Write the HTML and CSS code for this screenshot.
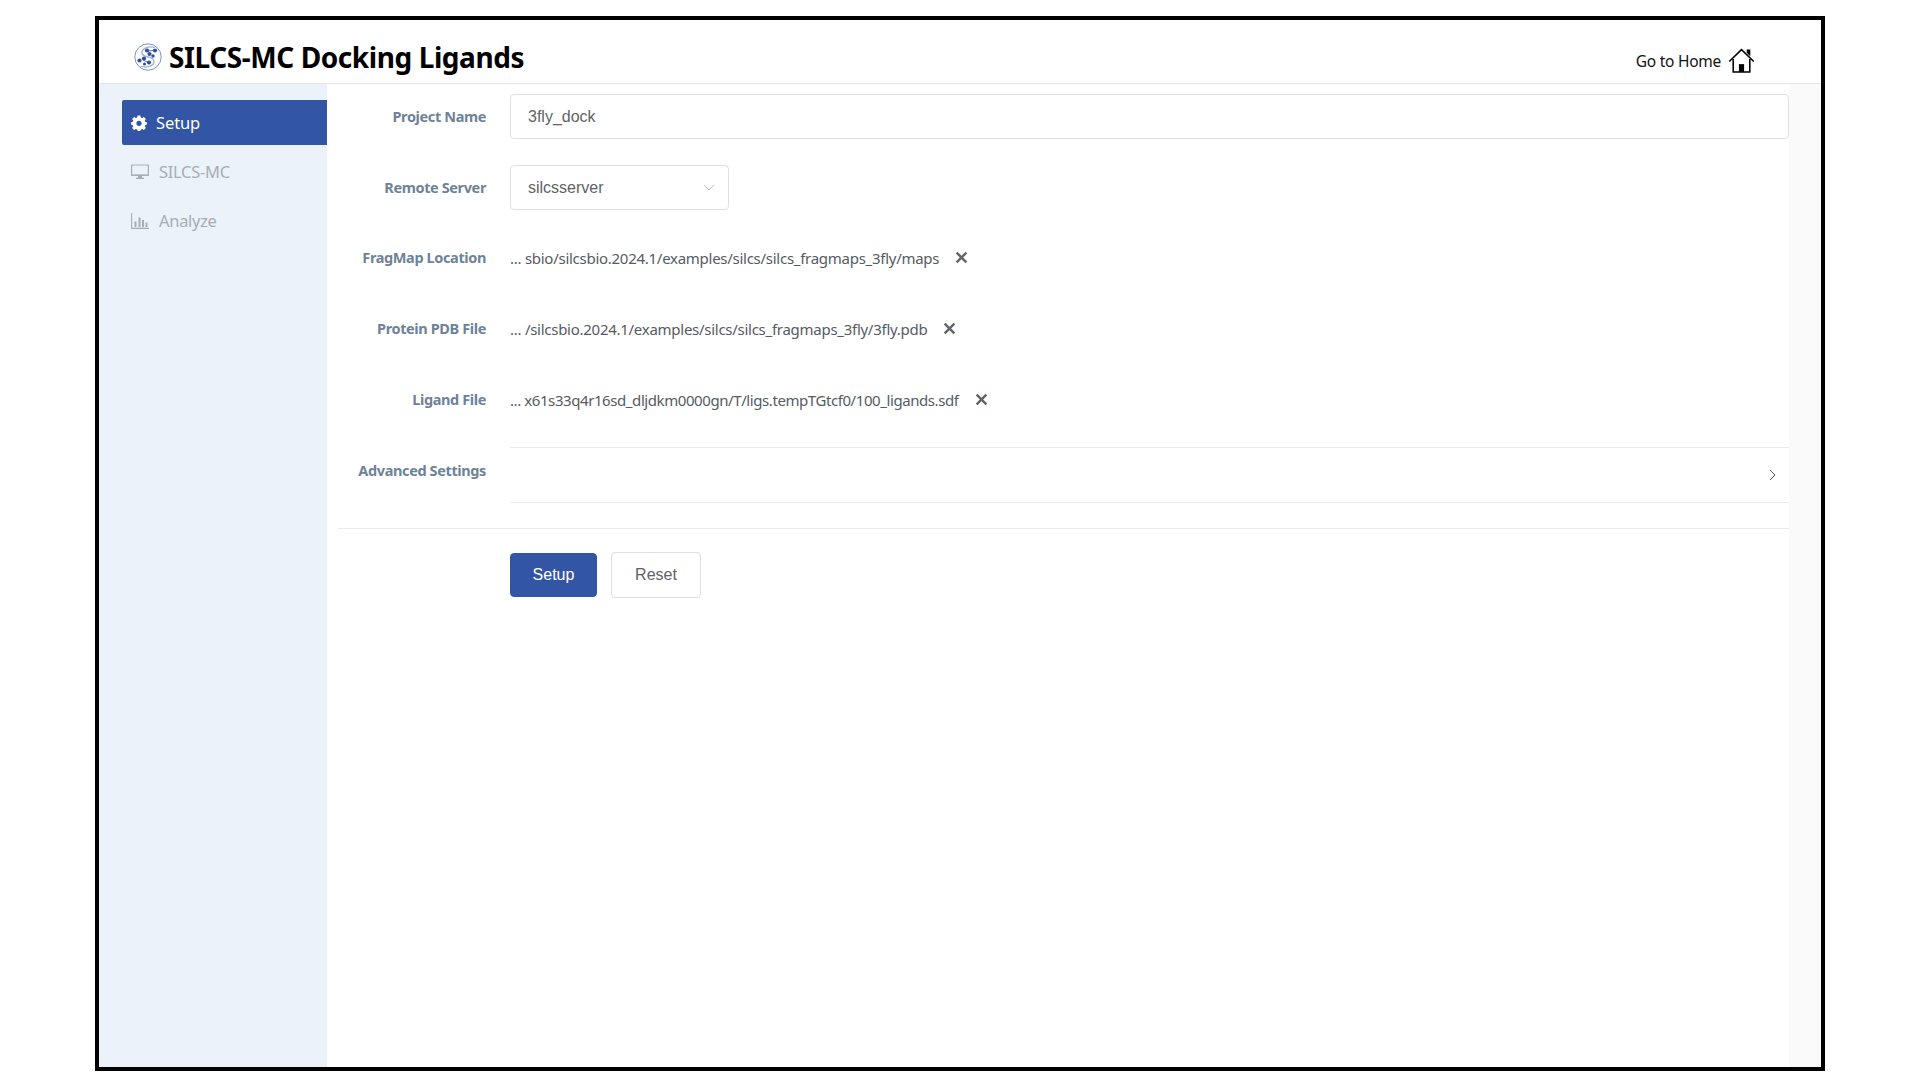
FILE: index.html
```html
<!DOCTYPE html>
<html lang="en">
<head>
    <meta charset="UTF-8">
    <meta name="viewport" content="width=device-width, initial-scale=1.0">
    <title>SILCS-MC Docking Ligands</title>
    <link rel="stylesheet" href="styles.css">
</head>
<body>
    <div class="frame">
        <!-- Header -->
        <header class="top-bar">
            <div class="brand">
                <svg class="brand-logo" viewBox="0 0 28 28">
                    <circle cx="14" cy="14" r="13.2" fill="#fff" stroke="#6f88bd" stroke-width="0.9"/>
                    <path d="M21 4.5C15 2.5 7 5.5 8 10.5C9 15 19.5 13 20 18C20.5 23 12 25.5 6.5 23" fill="none" stroke="#9db0d6" stroke-width="1.3"/>
                    <path d="M12 8L21 7.5M9 17L15 20" fill="none" stroke="#2f5299" stroke-width="0.8"/>
                    <g fill="#2f5299">
                        <circle cx="13" cy="7.5" r="2.1"/>
                        <circle cx="21" cy="7.5" r="2.1"/>
                        <circle cx="15.5" cy="11" r="2.1"/>
                        <circle cx="19" cy="13" r="1.7"/>
                        <circle cx="10" cy="15.5" r="2.1"/>
                        <circle cx="5.5" cy="17.5" r="2.1"/>
                        <circle cx="15" cy="19.5" r="2.1"/>
                        <circle cx="10.5" cy="21" r="1.5"/>
                    </g>
                </svg>
                <h1 class="brand-title">SILCS-MC Docking Ligands</h1>
            </div>
            <a class="home-link">
                <span class="home-text">Go to Home</span>
                <svg class="home-icon" viewBox="0 0 26 24">
                    <path d="M1.2 13L13 1.5L24.8 13" fill="none" stroke="#000" stroke-width="1.5"/>
                    <path d="M5 10.5V23H21V10.5" fill="none" stroke="#000" stroke-width="1.5"/>
                    <path d="M18 1.5H21.5V8L18 4.5Z" fill="#000"/>
                    <path d="M10.5 23V15.5H15.5V23Z" fill="#000"/>
                </svg>
            </a>
        </header>

        <div class="content">
            <!-- Sidebar -->
            <nav class="sidebar">
                <a class="nav-item active">
                    <svg class="nav-icon gear" viewBox="0 0 16 16">
                        <path fill-rule="evenodd" fill="#fff" d="M6.6 0.5H9.4L9.8 2.5L11.2 3.1L12.9 2L14.9 4L13.8 5.7L14.4 7.1L16 7.5V9.5L14.4 9.9L13.8 11.3L14.9 13L12.9 15L11.2 13.9L9.8 14.5L9.4 16H6.6L6.2 14.5L4.8 13.9L3.1 15L1.1 13L2.2 11.3L1.6 9.9L0 9.5V7.5L1.6 7.1L2.2 5.7L1.1 4L3.1 2L4.8 3.1L6.2 2.5ZM8 5.7A2.6 2.6 0 1 0 8 10.9A2.6 2.6 0 1 0 8 5.7Z"/>
                    </svg>
                    <span>Setup</span>
                </a>
                <a class="nav-item">
                    <svg class="nav-icon" viewBox="0 0 18 16">
                        <path fill="none" stroke="#a8adb3" stroke-width="1.2" d="M0.6 1H17.4V11.4H0.6Z"/>
                        <path fill="#a8adb3" d="M0 10.5H18V12H0ZM7 12H11V13.8H13V15H5V13.8H7Z"/>
                    </svg>
                    <span>SILCS-MC</span>
                </a>
                <a class="nav-item">
                    <svg class="nav-icon" viewBox="0 0 18 16">
                        <path fill="none" stroke="#a8adb3" stroke-width="1.1" d="M0.6 0V15.4H18"/>
                        <path fill="#a8adb3" d="M3.5 8.5H5.5V14H3.5ZM7.5 4.5H9.5V14H7.5ZM11 7H13V14H11ZM14.5 9.5H16.5V14H14.5Z"/>
                    </svg>
                    <span>Analyze</span>
                </a>
            </nav>

            <!-- Main form -->
            <main class="main">
                <div class="form-row">
                    <label class="form-label">Project Name</label>
                    <div class="form-field">
                        <div class="text-input">3fly_dock</div>
                    </div>
                </div>
                <div class="form-row">
                    <label class="form-label">Remote Server</label>
                    <div class="form-field">
                        <div class="select-input">
                            <span>silcsserver</span>
                            <svg class="select-caret" viewBox="0 0 12 7">
                                <path d="M1 1L6 6L11 1" fill="none" stroke="#c0c4cc" stroke-width="1"/>
                            </svg>
                        </div>
                    </div>
                </div>
                <div class="form-row path-row">
                    <label class="form-label">FragMap Location</label>
                    <div class="form-field">
                        <span class="file-path">... sbio/silcsbio.2024.1/examples/silcs/silcs_fragmaps_3fly/maps</span>
                        <svg class="clear-icon" viewBox="0 0 12 12"><path d="M1.5 1.5L10.5 10.5M10.5 1.5L1.5 10.5" stroke="#606469" stroke-width="2.2"/></svg>
                    </div>
                </div>
                <div class="form-row path-row">
                    <label class="form-label">Protein PDB File</label>
                    <div class="form-field">
                        <span class="file-path">... /silcsbio.2024.1/examples/silcs/silcs_fragmaps_3fly/3fly.pdb</span>
                        <svg class="clear-icon" viewBox="0 0 12 12"><path d="M1.5 1.5L10.5 10.5M10.5 1.5L1.5 10.5" stroke="#606469" stroke-width="2.2"/></svg>
                    </div>
                </div>
                <div class="form-row path-row">
                    <label class="form-label">Ligand File</label>
                    <div class="form-field">
                        <span class="file-path tight">... x61s33q4r16sd_dljdkm0000gn/T/ligs.tempTGtcf0/100_ligands.sdf</span>
                        <svg class="clear-icon" viewBox="0 0 12 12"><path d="M1.5 1.5L10.5 10.5M10.5 1.5L1.5 10.5" stroke="#606469" stroke-width="2.2"/></svg>
                    </div>
                </div>
                <div class="advanced-row">
                    <label class="form-label">Advanced Settings</label>
                    <div class="collapse-head">
                        <svg class="collapse-arrow" viewBox="0 0 7 12">
                            <path d="M1 1L6 6L1 11" fill="none" stroke="#555" stroke-width="1"/>
                        </svg>
                    </div>
                </div>
                <div class="form-actions">
                    <button class="btn btn-primary">Setup</button>
                    <button class="btn btn-plain">Reset</button>
                </div>
            </main>

            <div class="gutter"></div>
        </div>
    </div>
</body>
</html>
```

FILE: styles.css
```css
* {
    box-sizing: border-box;
}

html, body {
    margin: 0;
    height: 100%;
    background-color: #fff;
}

body {
    padding: 16px 95px 9px;
    font-family: "Noto Sans", sans-serif;
}

.frame {
    display: flex;
    flex-direction: column;
    height: 1055px;
    border: 4px solid #000;
    background-color: #fff;
}

/* Header */
.top-bar {
    display: flex;
    align-items: center;
    justify-content: space-between;
    flex: 0 0 64px;
    padding: 0 66px 0 35px;
    border-bottom: 1px solid #e4e6ea;
}

.brand {
    display: flex;
    align-items: center;
    gap: 7px;
    margin-top: 10px;
}

.brand-logo {
    width: 28px;
    height: 28px;
}

.brand-title {
    margin: 0;
    font-size: 28px;
    font-weight: 700;
    letter-spacing: -0.42px;
    line-height: 36px;
    color: #000;
}

.home-link {
    display: flex;
    align-items: center;
    gap: 7px;
    margin-top: 17px;
    font-size: 15.5px;
    letter-spacing: -0.25px;
    color: #111;
}

.home-text {
    margin-top: 2px;
}

.home-icon {
    width: 27px;
    height: 25px;
}

/* Layout */
.content {
    display: flex;
    flex: 1;
    min-height: 0;
}

.sidebar {
    display: flex;
    flex-direction: column;
    gap: 4px;
    flex: 0 0 228px;
    padding: 16px 0 0 23px;
    background-color: #ebf2fa;
}

.nav-item {
    display: flex;
    align-items: center;
    gap: 10px;
    height: 45px;
    padding-left: 9px;
    font-size: 16.5px;
    letter-spacing: -0.3px;
    color: #a8adb3;
}

.nav-item.active {
    gap: 9px;
    border-radius: 2px 0 0 2px;
    background-color: #3355a5;
    letter-spacing: -0.1px;
    color: #fff;
}

.nav-icon {
    width: 18px;
    height: 16px;
}

.nav-icon.gear {
    width: 16px;
    height: 16px;
}

.main {
    flex: 1;
    padding: 10px 0 0 11px;
}

.gutter {
    flex: 0 0 32px;
    background-color: #fafafa;
}

/* Form */
.form-row {
    display: flex;
    align-items: center;
    min-height: 45px;
    margin-bottom: 26px;
}

.path-row {
    padding-bottom: 2px;
}

.form-label {
    flex: 0 0 148px;
    margin-right: 24px;
    margin-bottom: 1px;
    text-align: right;
    font-size: 14.5px;
    font-weight: 700;
    letter-spacing: -0.38px;
    color: #6d8299;
}

.form-field {
    display: flex;
    align-items: center;
    flex: 1;
}

.text-input,
.select-input {
    display: flex;
    align-items: center;
    height: 45px;
    padding: 0 17px;
    border: 1px solid #dcdfe6;
    border-radius: 4px;
    background-color: #fff;
    font-family: "Liberation Sans", sans-serif;
    font-size: 16px;
    color: #606266;
}

.text-input {
    width: 100%;
}

.select-input {
    justify-content: space-between;
    width: 219px;
    padding-right: 13px;
}

.select-caret {
    width: 12px;
    height: 7px;
}

.file-path {
    font-size: 15px;
    letter-spacing: -0.27px;
    color: #555b63;
}

.file-path.tight {
    letter-spacing: -0.42px;
}

.clear-icon {
    width: 13px;
    height: 13px;
    margin-left: 16px;
}

.advanced-row {
    display: flex;
    align-items: flex-start;
    height: 82px;
    margin-top: -2px;
    border-bottom: 1px solid #e9ebef;
}

.advanced-row .form-label {
    margin-top: 13px;
}

.collapse-head {
    display: flex;
    align-items: center;
    justify-content: flex-end;
    flex: 1;
    height: 56px;
    padding-right: 13px;
    border-top: 1px solid #e9ebef;
    border-bottom: 1px solid #e9ebef;
}

.collapse-arrow {
    width: 7px;
    height: 12px;
}

.form-actions {
    display: flex;
    align-items: center;
    gap: 14px;
    margin-top: 23px;
    padding-left: 172px;
}

.btn {
    height: 44px;
    border-radius: 4px;
    font-family: "Liberation Sans", sans-serif;
    font-size: 16px;
    cursor: pointer;
}

.btn-primary {
    width: 87px;
    border: 1px solid #3355a5;
    background-color: #3355a5;
    color: #fff;
}

.btn-plain {
    width: 90px;
    height: 46px;
    border: 1px solid #dcdfe6;
    background-color: #fff;
    color: #606266;
}
```
